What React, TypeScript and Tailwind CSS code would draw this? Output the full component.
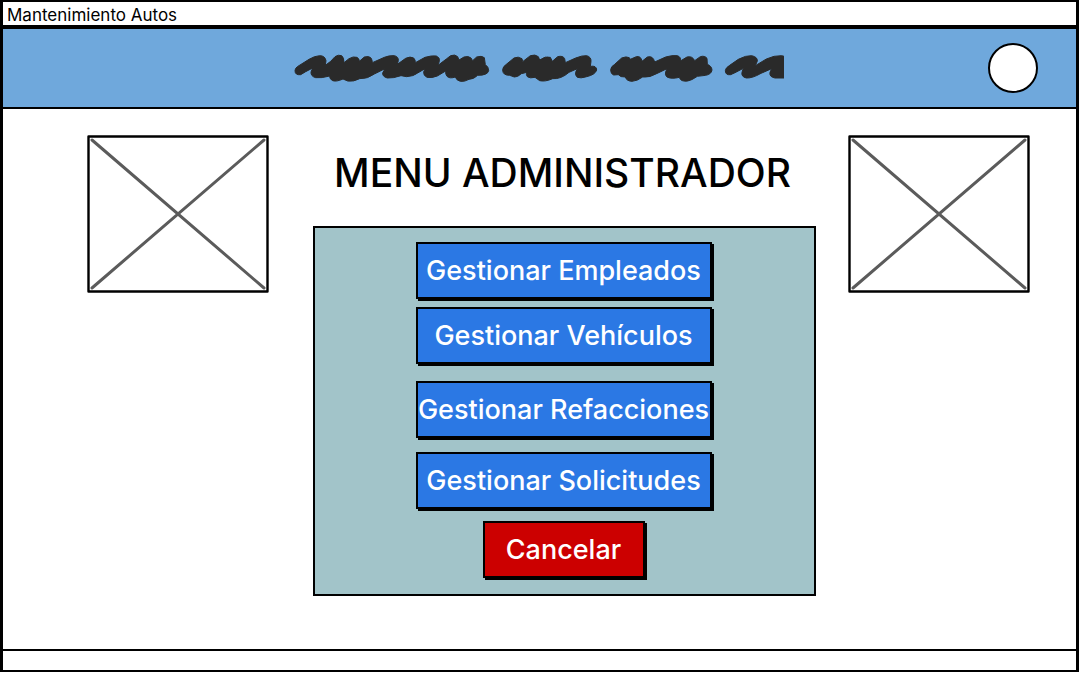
function Scribble() {
  return (
    <svg viewBox="0 0 1497 150" className="h-[50px] w-[499px]" role="img" aria-label="Logo">
      <g fill="#2a2a2a" stroke="#2a2a2a" strokeWidth="3" strokeLinejoin="round">
        <path d="M30 92 Q30 85 37 80 L72 58 Q88 48 104 47 Q120 47 123 62 L121 76 L137 64 L150 50 Q160 43 170 47 Q177 52 177 68 L192 56 Q205 48 216 52 Q224 57 223 64 L238 51 Q252 47 258 54 Q262 60 262 68 L298 52 Q312 46 328 47 Q341 50 340 62 L337 73 L362 55 Q376 48 386 54 Q392 60 391 68 L420 52 Q440 46 454 48 Q466 53 463 64 L459 76 L484 57 L497 47 Q510 42 518 50 L522 60 L537 51 Q550 47 558 54 L563 62 L575 51 Q590 46 598 53 L601 74 Q611 80 611 92 Q608 106 578 106 Q566 118 552 118 Q538 126 526 124 Q514 121 511 111 Q494 117 486 109 Q481 103 482 93 L457 108 Q440 115 426 112 Q415 107 416 96 L420 86 L398 99 Q386 109 365 110 L348 107 Q325 115 307 114 Q292 110 293 99 L300 86 L268 102 Q248 117 224 116 Q205 126 188 123 L174 117 Q154 126 143 122 Q133 117 134 108 Q110 115 92 113 Q77 109 78 96 L83 84 L62 95 L47 104 Q30 106 30 92 Z" />
        <path d="M653 90 Q653 80 664 73 L687 54 Q700 48 711 56 L713 65 L736 47 Q751 42 760 50 L764 60 Q782 47 796 52 L802 64 L818 50 Q834 46 839 56 L841 68 L872 54 Q892 46 905 47 Q919 51 918 64 L916 79 Q935 76 935 90 Q931 104 905 110 Q886 116 877 112 Q868 104 873 94 L877 86 L852 97 Q828 118 803 116 Q780 126 764 122 L750 112 Q735 116 727 110 Q722 104 726 97 L709 101 Q698 112 688 111 L674 106 Q653 106 653 90 Z" />
        <path d="M977 90 Q977 80 989 73 L1010 54 Q1024 48 1033 53 L1036 58 L1054 50 Q1068 47 1071 64 L1087 51 Q1104 46 1109 66 L1142 51 Q1162 45 1177 47 Q1189 51 1186 63 L1206 51 Q1222 47 1229 62 L1246 50 Q1259 46 1266 55 L1267 73 Q1280 78 1281 90 Q1279 103 1262 106 L1237 109 Q1220 121 1208 123 Q1187 126 1183 112 Q1159 118 1146 111 Q1139 105 1142 96 L1146 86 L1119 99 Q1094 114 1073 111 Q1057 123 1041 124 Q1024 123 1021 111 Q1006 112 1000 104 L986 105 Q977 102 977 90 Z" />
        <path d="M1321 92 Q1321 84 1334 76 L1360 58 Q1382 46 1400 47 Q1418 51 1417 63 L1411 77 L1444 57 Q1467 46 1490 47 L1497 49 L1497 114 L1470 114 Q1452 111 1455 97 L1460 86 L1428 100 Q1402 115 1384 114 Q1368 110 1371 97 L1375 85 L1350 98 L1337 104 Q1321 106 1321 92 Z" />
      </g>
    </svg>
  );
}

function ImageBox({ label }: { label: string }) {
  return (
    <svg viewBox="0 0 182 158" className="mt-[26px] h-[158px] w-[182px] shrink-0" role="img" aria-label={label}>
      <path d="M5 5 L177 153 M177 5 L5 153" stroke="#5b5b5b" strokeWidth="3" strokeLinecap="round" />
      <path d="M1.5 1.5 L180.5 1.5 L180.5 156.5 L1.5 156.5 Z" fill="none" stroke="#000" strokeWidth="2.4" strokeLinejoin="round" />
    </svg>
  );
}

const buttonBase =
  "h-[57px] border-2 border-black text-[27px] leading-8 font-medium whitespace-nowrap text-white shadow-[2px_2px_0_#000]";

export default function App() {
  return (
    <div className="flex min-h-screen flex-col bg-white pb-px font-['Inter','Liberation_Sans',sans-serif] text-black">
      <div className="flex flex-1 flex-col border-x-3 border-y-2 border-black">
        <div className="flex h-[25px] items-center border-b-2 border-black px-1 pt-0.5 text-[17px] leading-5">
          Mantenimiento Autos
        </div>
        <header className="relative flex h-[82px] items-center justify-center border-y-2 border-black bg-[#6fa8dc] pr-[10px] pb-[6px]">
          <Scribble />
          <button
            type="button"
            aria-label="Perfil"
            className="absolute top-[14px] right-[38px] size-[50px] rounded-full border-2 border-black bg-white"
          />
        </header>
        <main className="flex flex-1 justify-center pb-[52px] pl-[38px]">
          <ImageBox label="Imagen izquierda" />
          <div className="mr-8 ml-11 flex w-[503px] flex-col">
            <h1 className="pt-10 pr-1 pb-[29px] text-center text-[39px] leading-12 font-medium whitespace-nowrap">
              MENU ADMINISTRADOR
            </h1>
            <nav className="flex h-[370px] flex-col items-center border-2 border-black bg-[#a2c4c9] pt-[14px] pr-0.5">
              <button type="button" className={`${buttonBase} w-[296px] bg-[#2b78e4]`}>
                Gestionar Empleados
              </button>
              <button type="button" className={`${buttonBase} mt-2 w-[296px] bg-[#2b78e4]`}>
                Gestionar Vehículos
              </button>
              <button type="button" className={`${buttonBase} mt-[17px] w-[296px] bg-[#2b78e4]`}>
                Gestionar Refacciones
              </button>
              <button type="button" className={`${buttonBase} mt-[14px] w-[296px] bg-[#2b78e4]`}>
                Gestionar Solicitudes
              </button>
              <button type="button" className={`${buttonBase} mt-3 w-[162px] bg-[#cc0000]`}>
                Cancelar
              </button>
            </nav>
          </div>
          <ImageBox label="Imagen derecha" />
        </main>
        <footer className="h-[21px] border-t-2 border-black" />
      </div>
    </div>
  );
}
